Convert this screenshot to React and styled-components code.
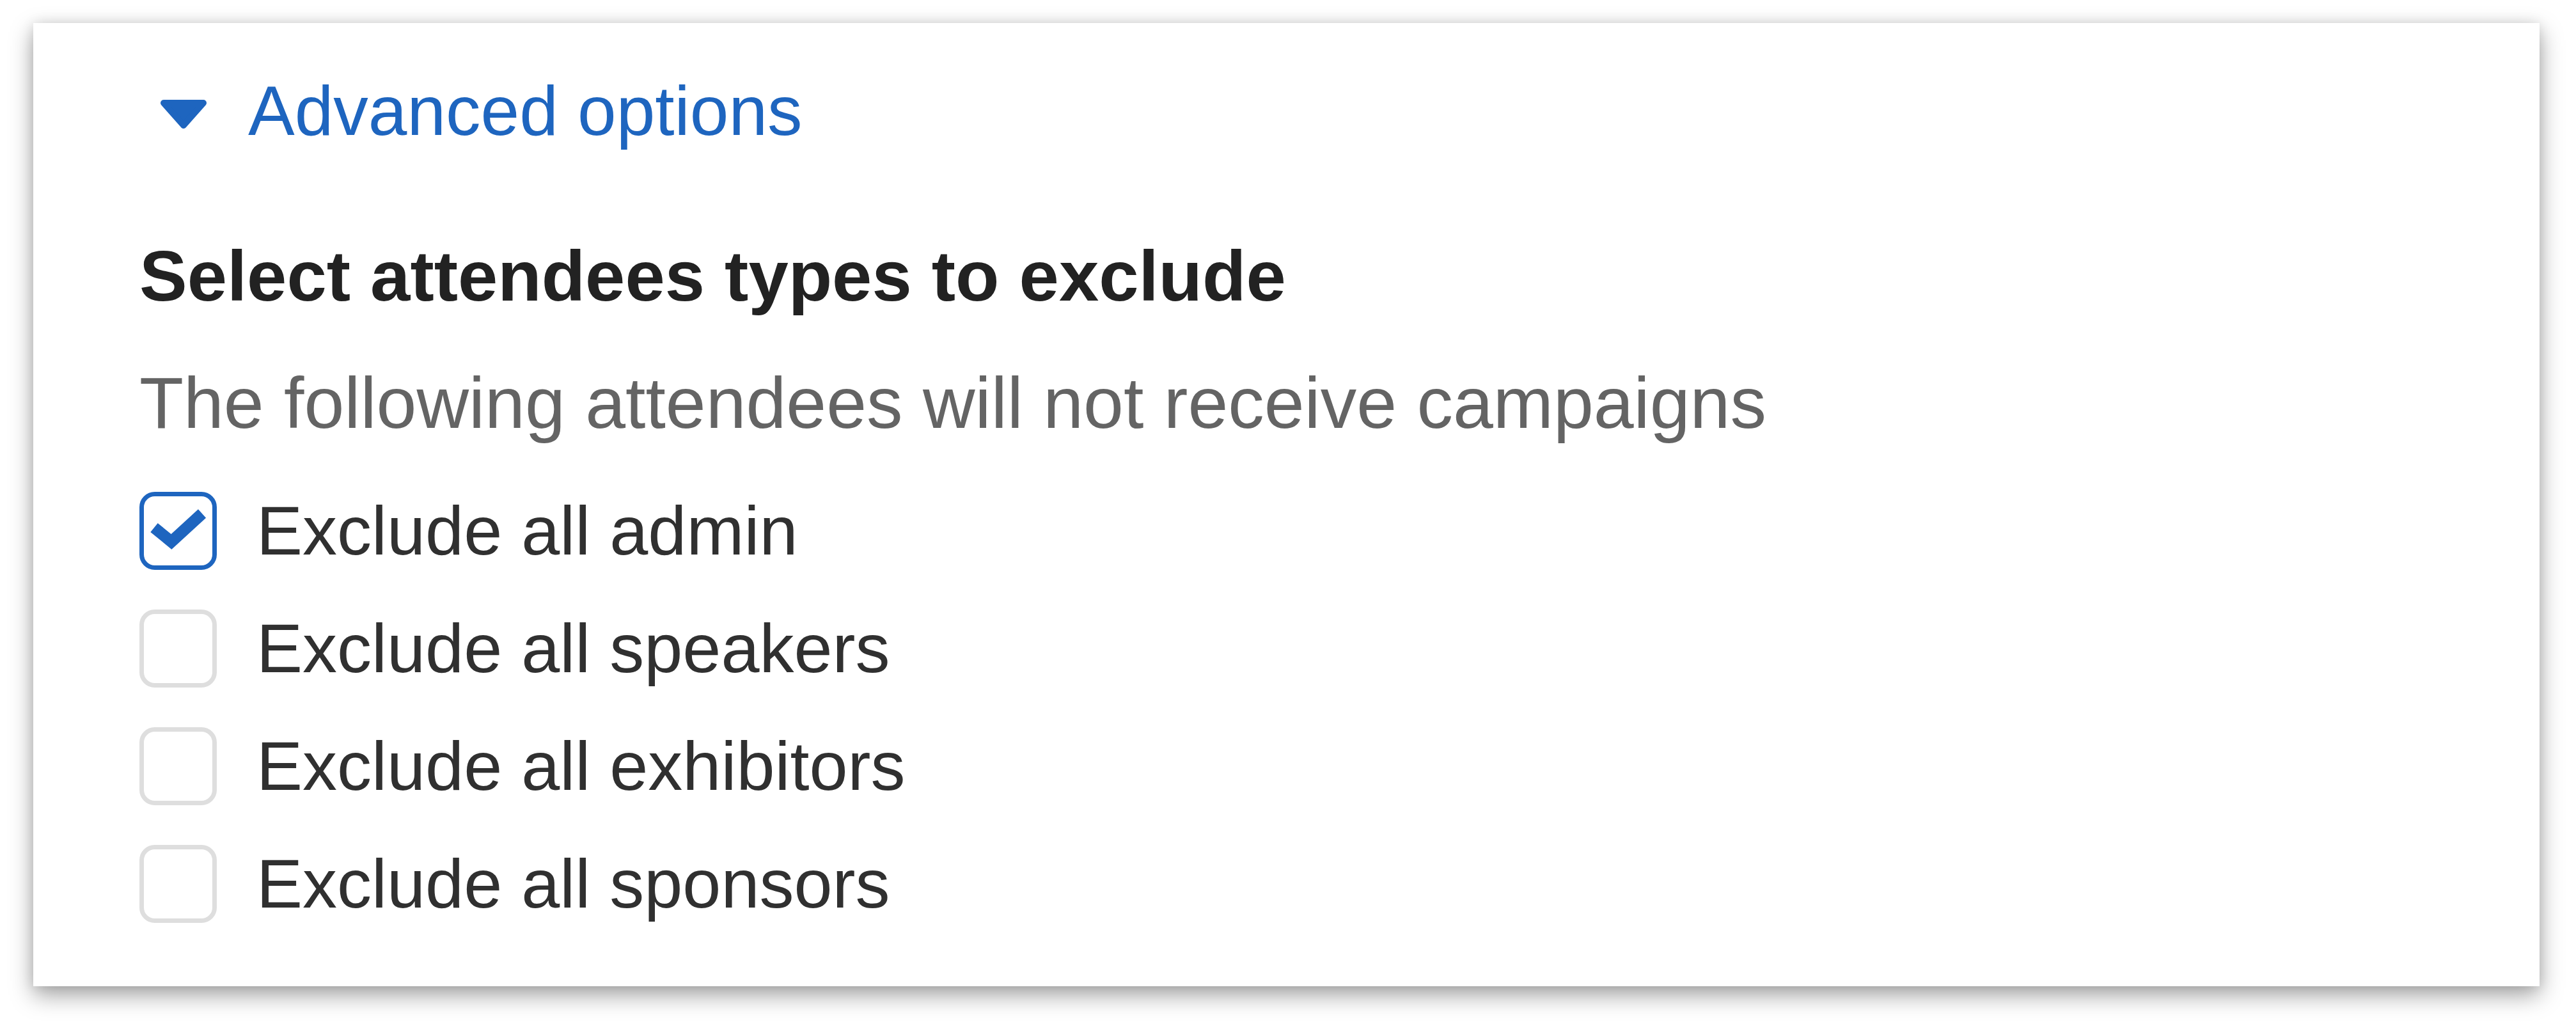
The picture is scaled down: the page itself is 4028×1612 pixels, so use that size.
import React, { useState } from "react";
import styled, { createGlobalStyle } from "styled-components";

const GlobalStyle = createGlobalStyle`
  html, body {
    margin: 0;
    padding: 0;
    background: #ffffff;
  }
  body {
    font-family: "Liberation Sans", Arial, Helvetica, sans-serif;
  }
`;

const Page = styled.div`
  min-height: 100vh;
  box-sizing: border-box;
  padding: 36px 57px 68px 52px;
`;

const Card = styled.section`
  background: #ffffff;
  box-shadow: 0 14px 34px rgba(0, 0, 0, 0.36), 0 0 18px rgba(0, 0, 0, 0.1);
  padding: 74px 0 97px 166px;
  font-size: 110px;
  line-height: 126px;
`;

const Toggle = styled.button`
  display: flex;
  align-items: center;
  gap: 64px;
  margin-left: 32px;
  padding: 0;
  border: 0;
  background: none;
  font: inherit;
  font-size: 109px;
  color: #1e65bf;
  cursor: pointer;
`;

const Caret = styled.svg`
  width: 74px;
  height: 46px;
  margin-top: 12px;
  flex-shrink: 0;
`;

const Heading = styled.h3`
  margin: 133px 0 0;
  font-size: 112px;
  font-weight: 700;
  color: #222222;
`;

const Hint = styled.p`
  margin: 72px 0 0;
  font-size: 113px;
  color: #646464;
`;

const List = styled.div`
  display: flex;
  flex-direction: column;
  gap: 58px;
  margin-top: 74px;
`;

const Row = styled.label`
  display: flex;
  align-items: center;
  gap: 62px;
  font-size: 108px;
  color: #303030;
  cursor: pointer;
`;

const Box = styled.span`
  box-sizing: border-box;
  width: 121px;
  height: 122px;
  flex-shrink: 0;
  display: flex;
  border: 7px solid ${(p) => (p.$checked ? "#1e65bf" : "#dedede")};
  border-radius: 24px;
  background: #ffffff;

  svg {
    width: 107px;
    height: 108px;
  }
`;

const HiddenInput = styled.input`
  display: none;
`;

const types = [
  { id: "admin", label: "Exclude all admin" },
  { id: "speakers", label: "Exclude all speakers" },
  { id: "exhibitors", label: "Exclude all exhibitors" },
  { id: "sponsors", label: "Exclude all sponsors" },
];

function Checkbox({ checked, onChange, children }) {
  return (
    <Row>
      <HiddenInput type="checkbox" checked={checked} onChange={onChange} />
      <Box $checked={checked}>
        {checked && (
          <svg viewBox="0 0 107 108">
            <path
              d="M16 49 L43 71 L91 27"
              fill="none"
              stroke="#1e65bf"
              strokeWidth="18"
              strokeLinejoin="miter"
            />
          </svg>
        )}
      </Box>
      <span>{children}</span>
    </Row>
  );
}

export default function App() {
  const [open, setOpen] = useState(true);
  const [excluded, setExcluded] = useState({ admin: true });

  const toggle = (id) => setExcluded((prev) => ({ ...prev, [id]: !prev[id] }));

  return (
    <>
      <GlobalStyle />
      <Page>
        <Card>
          <Toggle onClick={() => setOpen(!open)}>
            <Caret viewBox="0 0 74 46">
              <path
                d="M6 5 H68 L37 40 Z"
                fill="#1e65bf"
                stroke="#1e65bf"
                strokeWidth="10"
                strokeLinejoin="round"
              />
            </Caret>
            Advanced options
          </Toggle>
          {open && (
            <>
              <Heading>Select attendees types to exclude</Heading>
              <Hint>The following attendees will not receive campaigns</Hint>
              <List>
                {types.map((t) => (
                  <Checkbox
                    key={t.id}
                    checked={!!excluded[t.id]}
                    onChange={() => toggle(t.id)}
                  >
                    {t.label}
                  </Checkbox>
                ))}
              </List>
            </>
          )}
        </Card>
      </Page>
    </>
  );
}
